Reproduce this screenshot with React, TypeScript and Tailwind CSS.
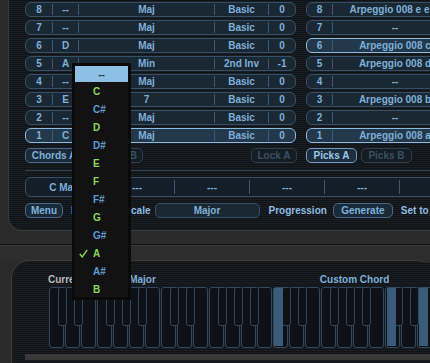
import React from 'react';

const leftRows = [
  ['8', '--', 'Maj', 'Basic', '0'],
  ['7', '--', 'Maj', 'Basic', '0'],
  ['6', 'D', 'Maj', 'Basic', '0'],
  ['5', 'A', 'Min', '2nd Inv', '-1'],
  ['4', '--', 'Maj', 'Basic', '0'],
  ['3', 'E', '7', 'Basic', '0'],
  ['2', '--', 'Maj', 'Basic', '0'],
  ['1', 'C', 'Maj', 'Basic', '0'],
];

const rightRows = [
  ['8', 'Arpeggio 008 e e16'],
  ['7', '--'],
  ['6', 'Arpeggio 008 c'],
  ['5', 'Arpeggio 008 d'],
  ['4', '--'],
  ['3', 'Arpeggio 008 b'],
  ['2', '--'],
  ['1', 'Arpeggio 008 a'],
];

const notes = ['C', 'C#', 'D', 'D#', 'E', 'F', 'F#', 'G', 'G#', 'A', 'A#', 'B'];

const scan =
  'bg-[image:repeating-linear-gradient(180deg,#111417_0px,#111417_1px,#1a1e22_1px,#1a1e22_2px)]';

function Divider() {
  return <div className="w-px h-[11px] bg-[#3c5872] shrink-0" />;
}

function Pill({ hot, className, children }: { hot?: boolean; className: string; children: React.ReactNode }) {
  return (
    <div
      className={`${className} h-[15px] shrink-0 flex items-center rounded-[6px] border ${
        hot ? 'border-[#8bbbe2] bg-[#24384b]' : 'border-[#365069] bg-[#1a2834]'
      }`}
    >
      {children}
    </div>
  );
}

function Btn({ w, dim, hot, children }: { w: string; dim?: boolean; hot?: boolean; children: React.ReactNode }) {
  return (
    <div
      className={`${w} h-[15px] shrink-0 flex items-center justify-center rounded-[5px] border ${
        dim
          ? 'border-[#2c3f50] text-[#3a5164] bg-[#141c24]'
          : hot
          ? 'border-[#6f9cc4] text-[#9cc9ee] bg-[#1d2e3d]'
          : 'border-[#48698a] text-[#7eb1da] bg-[#1a2a38]'
      }`}
    >
      {children}
    </div>
  );
}

function Keyboard() {
  const whites = Array.from({ length: 25 }, (_, i) => i);
  const blackOffsets = [10, 26, 58, 74, 90];
  const blacks: number[] = [];
  for (let o = 0; o < 4; o++) blackOffsets.forEach((b) => blacks.push(o * 112 + b));
  return (
    <svg width="390" height="62" className="block shrink-0">
      {whites.map((i) => (
        <rect key={i} x={i * 16 + 1.5} y={0.5} width={14} height={60} rx={2.5} fill="#0e1115" stroke="#324861" />
      ))}
      {blacks.map((x) => (
        <rect key={x} x={x + 0.5} y={0.5} width={8} height={38} rx={2} fill="#0e1115" stroke="#324861" />
      ))}
      <rect x={226} y={1} width={9} height={58} fill="#3b5b7b" />
      <rect x={339} y={1} width={9} height={58} fill="#3b5b7b" />
      <rect x={371} y={1} width={9} height={58} fill="#3b5b7b" />
    </svg>
  );
}

export default function App() {
  return (
    <div className="relative w-[430px] h-[363px] overflow-hidden bg-[#2a2a2a] font-['Liberation_Sans',Arial,sans-serif] font-bold text-[10px] leading-[13px] text-[#7eb1da]">
      {/* upper panel */}
      <div className={`ml-[8px] h-[231px] rounded-bl-[14px] border-l border-b border-[#3a3a3a] ${scan} pl-[16px] pt-[2px]`}>
        <div className="flex flex-col gap-[3px]">
          {leftRows.map((r, i) => (
            <div key={i} className="flex gap-[10px] w-[600px]">
              <Pill hot={r[0] === '1'} className="w-[271px]">
                <div className="w-[26px] text-center">{r[0]}</div>
                <Divider />
                <div className="w-[25px] text-center">{r[1]}</div>
                <Divider />
                <div className="w-[135px] text-center">{r[2]}</div>
                <Divider />
                <div className="w-[53px] text-center">{r[3]}</div>
                <Divider />
                <div className="flex-1 text-center">{r[4]}</div>
              </Pill>
              <Pill hot={rightRows[i][0] === '6' || rightRows[i][0] === '1'} className="w-[152px]">
                <div className="w-[25px] text-center">{rightRows[i][0]}</div>
                <Divider />
                <div className="flex-1 flex justify-center overflow-visible whitespace-nowrap">{rightRows[i][1]}</div>
              </Pill>
            </div>
          ))}
        </div>

        <div className="flex mt-[5px] w-[600px]">
          <Btn w="w-[58px]">Chords A</Btn>
          <div className="ml-[3px]">
            <Btn w="w-[57px]" dim>Chords B</Btn>
          </div>
          <div className="ml-[108px]">
            <Btn w="w-[46px]" dim>Lock A</Btn>
          </div>
          <div className="ml-[9px]">
            <Btn w="w-[51px]" hot>Picks A</Btn>
          </div>
          <div className="ml-[4px]">
            <Btn w="w-[51px]" dim>Picks B</Btn>
          </div>
        </div>

        <div className="mt-[7px] h-px w-[420px] bg-[#2e4254]" />

        <div className="mt-[6px] w-[500px] h-[20px] rounded-[6px] border border-[#365069] bg-[#141e28] flex items-center">
          {['C Maj', '---', '---', '---', '---', '---'].map((t, i) => (
            <React.Fragment key={i}>
              {i > 0 && <div className="w-px h-[14px] bg-[#3c5872] shrink-0" />}
              <div className={`${i === 0 ? 'w-[73px]' : 'w-[74px]'} text-center shrink-0`}>{t}</div>
            </React.Fragment>
          ))}
        </div>

        <div className="mt-[6px] flex items-center w-[600px] whitespace-nowrap">
          <Btn w="w-[38px]">Menu</Btn>
          <span className="ml-[8px] text-[#8fbde3]">Key</span>
          <div className="ml-[4px] w-[28px] h-[15px] rounded-[5px] border border-[#365069] bg-[#1a2834] flex items-center justify-center">A</div>
          <span className="ml-[3px] text-[#8fbde3]">Scale</span>
          <div className="ml-[4px] w-[105px] h-[15px] rounded-[5px] border border-[#365069] bg-[#1a2834] flex items-center justify-center">
            Major
          </div>
          <span className="ml-[9px] text-[#8fbde3]">Progression</span>
          <div className="ml-[6px]">
            <Btn w="w-[60px]">Generate</Btn>
          </div>
          <span className="ml-[8px] text-[#8fbde3]">Set to Key</span>
        </div>
      </div>

      {/* separator band */}
      <div className="h-[14px] bg-[#2b2b2b] border-b border-[#121212]" />
      <div className="h-[15px] bg-[#2d2d2d] border-t border-[#383838]" />

      {/* lower panel */}
      <div className="ml-[11px] w-[423px] h-[103px] rounded-t-[18px] border-t border-l border-[#3c3c3c] bg-[#1a1a1a] pt-[2px] pl-[2px]">
        <div className={`h-full rounded-tl-[16px] ${scan} pl-[34px] pt-[10px]`}>
          <div className="flex whitespace-nowrap">
            <span className="text-[#b9b9b9]">Current Scale:&nbsp;</span>
            <span>C Major</span>
            <span className="ml-[164px]">Custom Chord</span>
          </div>
          <div className="mt-[1px]">
            <Keyboard />
          </div>
          <div className="-ml-[23px] mt-[5px] h-[6px] bg-[#383838]" />
        </div>
      </div>

      {/* key dropdown menu */}
      <div className="absolute left-[72px] top-[63px] w-[59px] h-[237px] border-[3px] border-[#0a0a0a] bg-[#121212]">
        <div className="h-[16px] bg-[#8ec0e6] text-[#1f3447] flex items-center justify-center">--</div>
        {notes.map((n) => (
          <div key={n} className="relative h-[18px] flex items-center pl-[18px]">
            {n === 'A' && (
              <svg width="9" height="9" viewBox="0 0 9 9" className="absolute left-[4px] top-[5px]">
                <path d="M0.8 5 L3.2 8 L8.2 0.8" fill="none" stroke="#86d456" strokeWidth="1.4" />
              </svg>
            )}
            <span className={n.includes('#') ? 'text-[#5c9cd2]' : 'text-[#8cd85c]'}>{n}</span>
          </div>
        ))}
      </div>
    </div>
  );
}
